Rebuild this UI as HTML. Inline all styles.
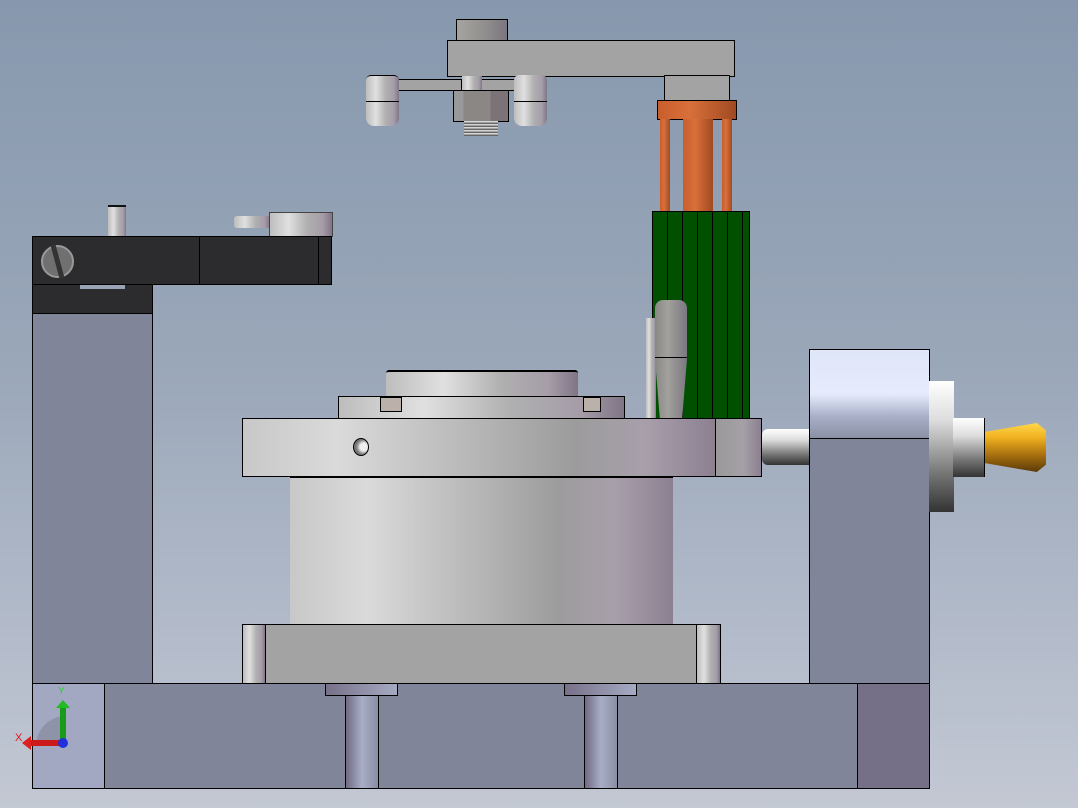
<!DOCTYPE html>
<html><head><style>
body{margin:0;width:1078px;height:808px;overflow:hidden;background:linear-gradient(#8798ae 0%,#9aa7b9 45%,#b4bccb 80%,#c3c8d3 100%);position:relative;font-family:"Liberation Sans",sans-serif}
div{position:absolute;box-sizing:border-box}
.b{border:1.5px solid #000}
.mg{background:#80859a}
.cyl{background:linear-gradient(90deg,#c8c8c8,#dadada 20%,#b5b5b5 50%,#9c9c9c 70%,#a89fab 85%,#8c8090)}
.met{background:linear-gradient(90deg,#bdbdbd,#e0e0e0 30%,#b0b0b0 60%,#a59ca8 85%,#7f7585)}
.or{background:linear-gradient(90deg,#c85e2c,#d9703a 40%,#a04a22)}
.vm{background:linear-gradient(#fff,#ddd 30%,#777 70%,#333)}
</style></head><body>
<!-- top arm -->
<div class="b" style="left:456px;top:19px;width:52px;height:23px;background:linear-gradient(90deg,#a5a5a0,#8f8d8c 60%,#7a7580)"></div>
<div class="b" style="left:447px;top:40px;width:288px;height:37px;background:#a3a3a3"></div>
<div class="b" style="left:664px;top:75px;width:66px;height:27px;background:#a3a3a3"></div>
<div class="b" style="left:394px;top:79px;width:68px;height:12px;background:#a3a3a3"></div>
<div class="b" style="left:481px;top:79px;width:40px;height:12px;background:#a3a3a3"></div>
<div class="met" style="left:462px;top:76px;width:20px;height:14px"></div>
<div class="met" style="left:366px;top:75px;width:33px;height:51px;border-radius:5px 5px 8px 8px;border-top:1px solid #000"></div>
<div style="left:366px;top:101px;width:33px;height:1px;background:#000"></div>
<div class="met" style="left:514px;top:75px;width:33px;height:51px;border-radius:5px 5px 8px 8px"></div>
<div style="left:514px;top:101px;width:33px;height:1px;background:#000"></div>
<div class="b" style="left:453px;top:90px;width:56px;height:32px;background:linear-gradient(90deg,#999 0,#999 18%,#8a8785 18%,#8a8785 68%,#7b7378 68%)"></div>
<div style="left:464px;top:121px;width:34px;height:15px;background:repeating-linear-gradient(#eee 0,#888 2px,#444 3px)"></div>
<!-- orange -->
<div class="b or" style="left:657px;top:100px;width:80px;height:20px"></div>
<div class="or" style="left:660px;top:119px;width:10px;height:93px"></div>
<div class="or" style="left:683px;top:119px;width:30px;height:93px"></div>
<div class="or" style="left:722px;top:119px;width:10px;height:93px"></div>
<!-- green -->
<div class="b" style="left:652px;top:211px;width:98px;height:208px;background:repeating-linear-gradient(90deg,#005000 0,#005000 14px,#000 14px,#000 15px)"></div>
<div class="met" style="left:646px;top:318px;width:10px;height:100px"></div>
<div style="left:655px;top:300px;width:32px;height:118px;background:linear-gradient(90deg,#888,#a3a19c 40%,#7a7880);border-radius:8px 8px 0 0;clip-path:polygon(0 0,100% 0,100% 50%,85% 100%,15% 100%,0 50%)"></div>
<div style="left:655px;top:357px;width:32px;height:1px;background:#000"></div>
<!-- left arm -->
<div class="met" style="left:108px;top:205px;width:18px;height:32px;border-top:2px solid #111"></div>
<div class="met" style="left:234px;top:216px;width:36px;height:12px;border-radius:3px"></div>
<div class="met" style="left:269px;top:212px;width:64px;height:25px;border:1px solid #444"></div>
<div class="b" style="left:32px;top:236px;width:300px;height:49px;background:#2c2c2f"></div>
<div style="left:199px;top:236px;width:1px;height:49px;background:#000"></div>
<div style="left:318px;top:236px;width:1px;height:49px;background:#000"></div>
<div style="left:41px;top:245px;width:33px;height:33px;border-radius:50%;background:#707070;border:2px solid #999"></div>
<div style="left:55px;top:245px;width:5px;height:33px;background:#333;transform:rotate(-15deg)"></div>
<div class="b" style="left:32px;top:284px;width:121px;height:30px;background:#2c2c2f"></div>
<div style="left:80px;top:285px;width:45px;height:4px;background:#9aa3b5"></div>
<div class="b mg" style="left:32px;top:313px;width:121px;height:371px"></div>
<!-- right -->
<div class="vm" style="left:762px;top:429px;width:48px;height:36px;border-radius:6px 0 0 6px"></div>
<div class="b" style="left:809px;top:349px;width:121px;height:90px;background:linear-gradient(#dfe6f8,#e6ebfc 50%,#aab0c8 75%,#8a90a5)"></div>
<div class="b mg" style="left:809px;top:438px;width:121px;height:246px"></div>
<div class="vm" style="left:929px;top:381px;width:25px;height:131px"></div>
<div class="vm" style="left:953px;top:418px;width:32px;height:59px;border-right:1px solid #000"></div>
<div style="left:985px;top:423px;width:61px;height:49px;background:linear-gradient(#ffd84a,#f0b020 30%,#a87010 65%,#5a3a08);clip-path:polygon(0 18%,85% 0,100% 15%,100% 85%,85% 100%,0 82%)"></div>
<!-- turntable -->
<div class="met" style="left:386px;top:370px;width:192px;height:27px;border-top:2px solid #000;border-radius:3px 3px 0 0"></div>
<div class="b met" style="left:338px;top:396px;width:287px;height:23px"></div>
<div class="b" style="left:380px;top:397px;width:22px;height:15px;background:#bbb0aa"></div>
<div class="b" style="left:583px;top:397px;width:18px;height:15px;background:#bbb0aa"></div>
<div class="b cyl" style="left:242px;top:418px;width:475px;height:59px"></div>
<div class="b" style="left:715px;top:418px;width:47px;height:59px;background:linear-gradient(90deg,#999,#a5a0a8 60%,#8c8090)"></div>
<div style="left:353px;top:438px;width:16px;height:18px;border-radius:50%;border:1.5px solid #000;background:radial-gradient(circle at 70% 50%,#eee 30%,#777 60%)"></div>
<div class="cyl" style="left:290px;top:477px;width:383px;height:148px;border-top:1px solid #000"></div>
<div class="b" style="left:242px;top:624px;width:479px;height:60px;background:#a3a3a3"></div>
<div class="b met" style="left:242px;top:624px;width:24px;height:60px"></div>
<div class="b met" style="left:696px;top:624px;width:25px;height:60px"></div>
<!-- base -->
<div class="b mg" style="left:32px;top:683px;width:898px;height:106px"></div>
<div class="b" style="left:32px;top:683px;width:73px;height:106px;background:#a3a8c2"></div>
<div class="b" style="left:857px;top:683px;width:73px;height:106px;background:#757088"></div>
<div class="b" style="left:325px;top:683px;width:73px;height:13px;background:linear-gradient(90deg,#777088,#a5abc3)"></div>
<div class="b" style="left:345px;top:695px;width:34px;height:94px;background:linear-gradient(90deg,#706a82,#a8aec6 50%,#8a8ea5)"></div>
<div class="b" style="left:564px;top:683px;width:73px;height:13px;background:linear-gradient(90deg,#777088,#a5abc3)"></div>
<div class="b" style="left:584px;top:695px;width:34px;height:94px;background:linear-gradient(90deg,#706a82,#a8aec6 50%,#8a8ea5)"></div>
<!-- triad -->
<div style="left:36px;top:716px;width:30px;height:30px;border-radius:30px 0 0 0;background:#8f93a8"></div>
<div style="left:60px;top:706px;width:6px;height:38px;background:#1a9a1a"></div>
<div style="left:56px;top:700px;width:0;height:0;border-left:7px solid transparent;border-right:7px solid transparent;border-bottom:8px solid #22bb22"></div>
<div style="left:30px;top:740px;width:32px;height:6px;background:#cc1a1a"></div>
<div style="left:22px;top:736px;width:0;height:0;border-top:7px solid transparent;border-bottom:7px solid transparent;border-right:9px solid #dd2020"></div>
<div style="left:58px;top:738px;width:10px;height:10px;border-radius:50%;background:#2030dd"></div>
<div style="left:58px;top:686px;font-size:10px;color:#20dd20">Y</div>
<div style="left:15px;top:732px;font-size:11px;color:#ee1111">X</div>
</body></html>
